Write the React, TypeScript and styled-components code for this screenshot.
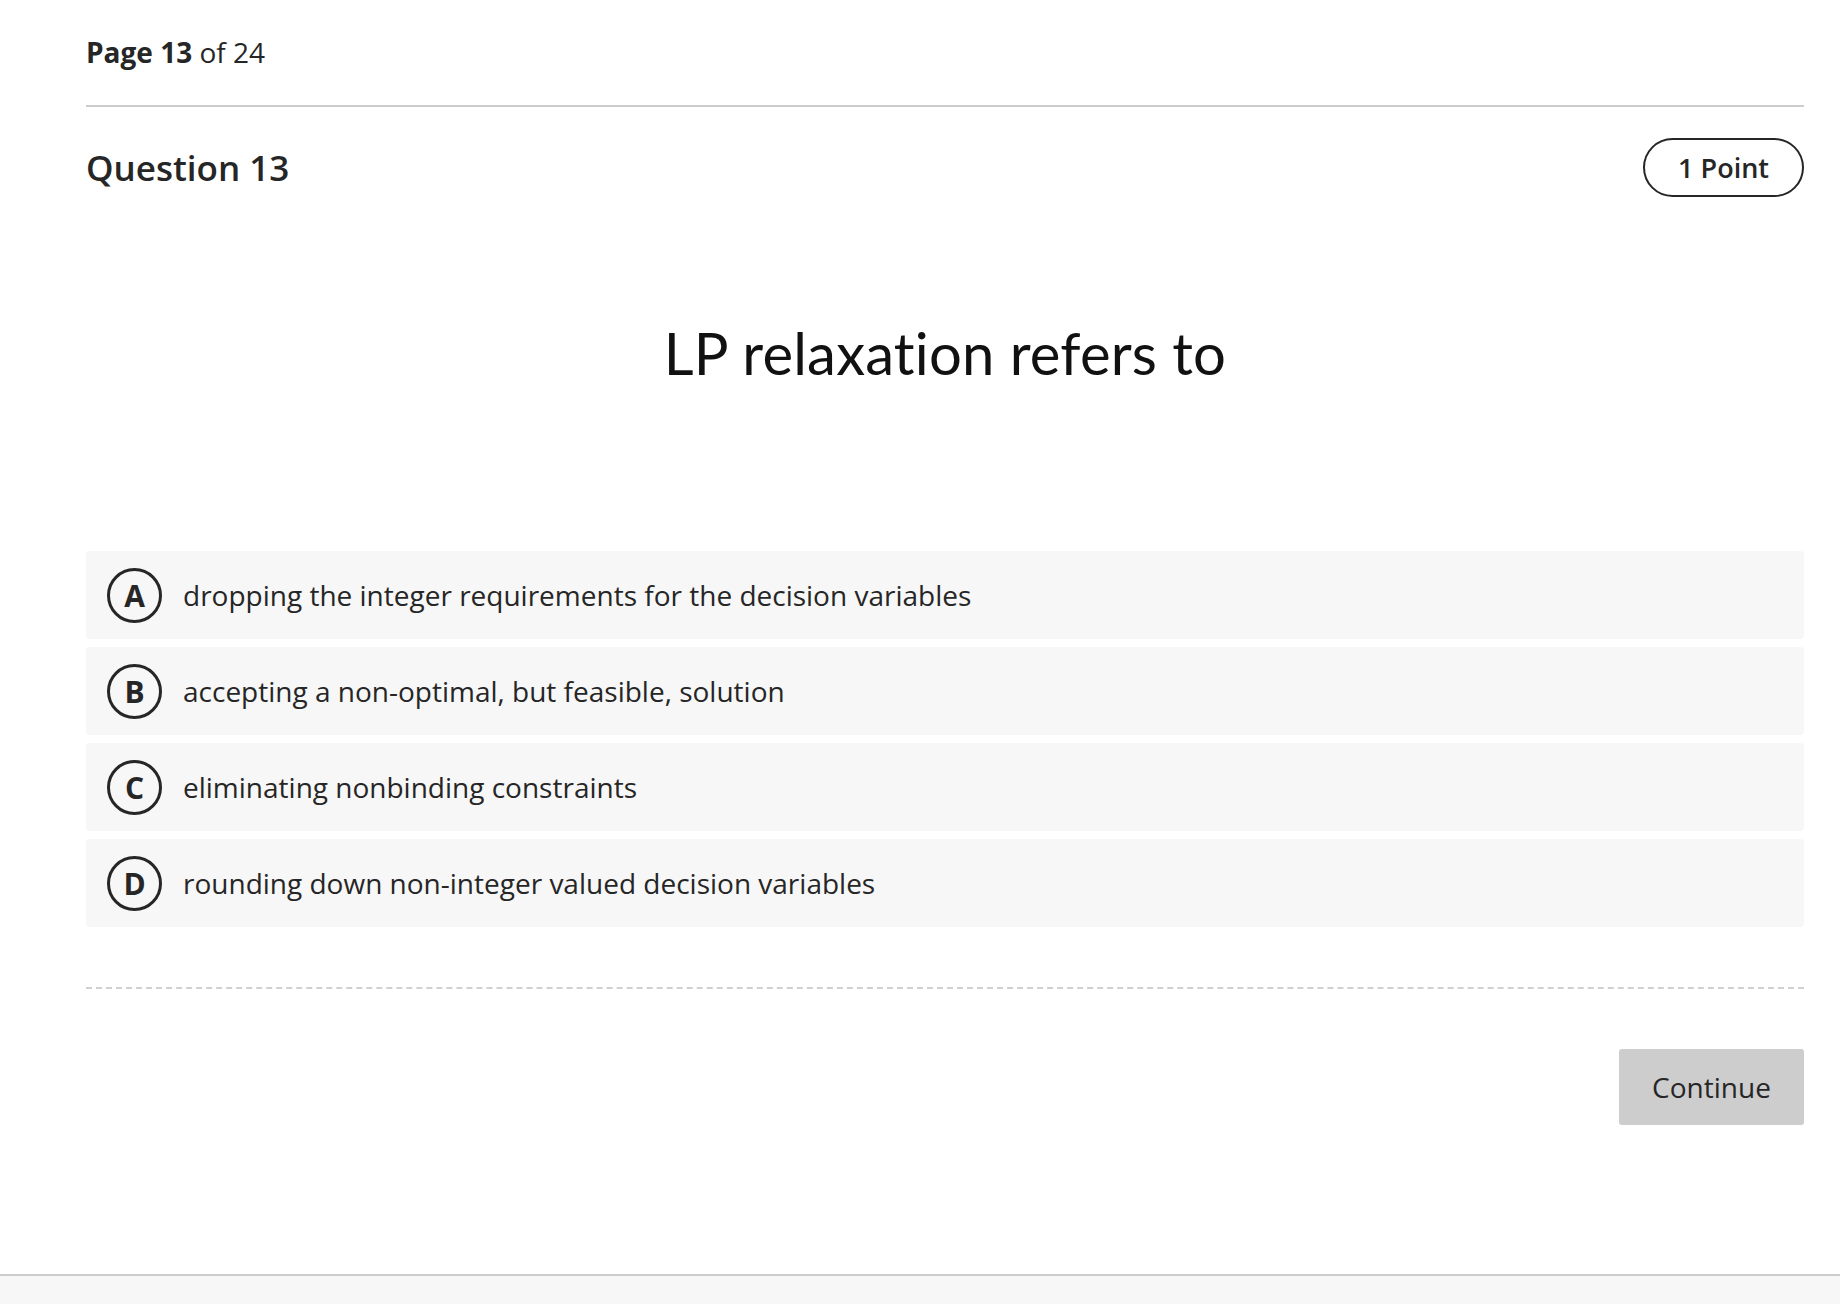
import React from 'react'
import styled, { createGlobalStyle } from 'styled-components'

const GlobalStyle = createGlobalStyle`
  html, body {
    margin: 0;
    padding: 0;
    background: #ffffff;
  }
  body {
    font-family: 'Open Sans', 'Noto Sans', sans-serif;
    color: #262626;
  }
`

const Page = styled.div`
  display: flex;
  flex-direction: column;
  min-height: 1304px;
`

const Main = styled.main`
  flex: 1;
  padding: 0 36px 0 86px;
`

const PageHeader = styled.header`
  padding: 32px 0 33px;
  border-bottom: 2px solid #cccccc;
  font-size: 28px;
  line-height: 40px;
`

const Strong = styled.strong`
  font-weight: 700;
`

const QuestionRow = styled.div`
  display: flex;
  align-items: center;
  justify-content: space-between;
  padding-top: 31px;
`

const QuestionTitle = styled.h1`
  margin: 0;
  font-size: 35px;
  font-weight: 600;
  line-height: 59px;
  color: #262626;
`

const PointPill = styled.span`
  display: inline-flex;
  align-items: center;
  box-sizing: border-box;
  height: 59px;
  padding: 0 33px;
  border: 2px solid #262626;
  border-radius: 30px;
  font-size: 27px;
  font-weight: 600;
`

const Prompt = styled.p`
  margin: 116px 0 158px;
  text-align: center;
  font-family: Lato, 'Open Sans', sans-serif;
  font-size: 58px;
  line-height: 80px;
  color: #111111;
  letter-spacing: 0.2px;
`

const OptionList = styled.ul`
  list-style: none;
  margin: 0;
  padding: 0;
  display: flex;
  flex-direction: column;
  gap: 8px;
`

const Option = styled.li`
  display: flex;
  align-items: center;
  gap: 21px;
  height: 88px;
  padding: 0 21px;
  background: #f7f7f7;
  border-radius: 4px;
`

const Letter = styled.span`
  display: flex;
  align-items: center;
  justify-content: center;
  box-sizing: border-box;
  width: 55px;
  height: 55px;
  border: 3px solid #262626;
  border-radius: 50%;
  font-size: 30px;
  font-weight: 700;
  flex-shrink: 0;
`

const OptionText = styled.span`
  font-size: 28px;
  color: #262626;
`

const Divider = styled.hr`
  margin: 60px 0 0;
  border: 0;
  border-top: 2px dashed #d0d0d0;
`

const Actions = styled.div`
  display: flex;
  justify-content: flex-end;
  padding-top: 60px;
`

const ContinueButton = styled.button`
  width: 185px;
  height: 76px;
  border: 0;
  border-radius: 3px;
  background: #cdcdcd;
  color: #262626;
  font-family: 'Open Sans', sans-serif;
  font-size: 28px;
`

const Footer = styled.footer`
  height: 28px;
  border-top: 2px solid #cccccc;
  background: #f7f7f7;
`

const options = [
  { key: 'A', text: 'dropping the integer requirements for the decision variables' },
  { key: 'B', text: 'accepting a non-optimal, but feasible, solution' },
  { key: 'C', text: 'eliminating nonbinding constraints' },
  { key: 'D', text: 'rounding down non-integer valued decision variables' },
]

const App: React.FC = () => {
  return (
    <Page>
      <GlobalStyle />
      <Main>
        <PageHeader>
          <Strong>Page 13</Strong> of 24
        </PageHeader>
        <QuestionRow>
          <QuestionTitle>Question 13</QuestionTitle>
          <PointPill>1 Point</PointPill>
        </QuestionRow>
        <Prompt>LP relaxation refers to</Prompt>
        <OptionList>
          {options.map((opt) => (
            <Option key={opt.key}>
              <Letter>{opt.key}</Letter>
              <OptionText>{opt.text}</OptionText>
            </Option>
          ))}
        </OptionList>
        <Divider />
        <Actions>
          <ContinueButton>Continue</ContinueButton>
        </Actions>
      </Main>
      <Footer />
    </Page>
  )
}

export default App
